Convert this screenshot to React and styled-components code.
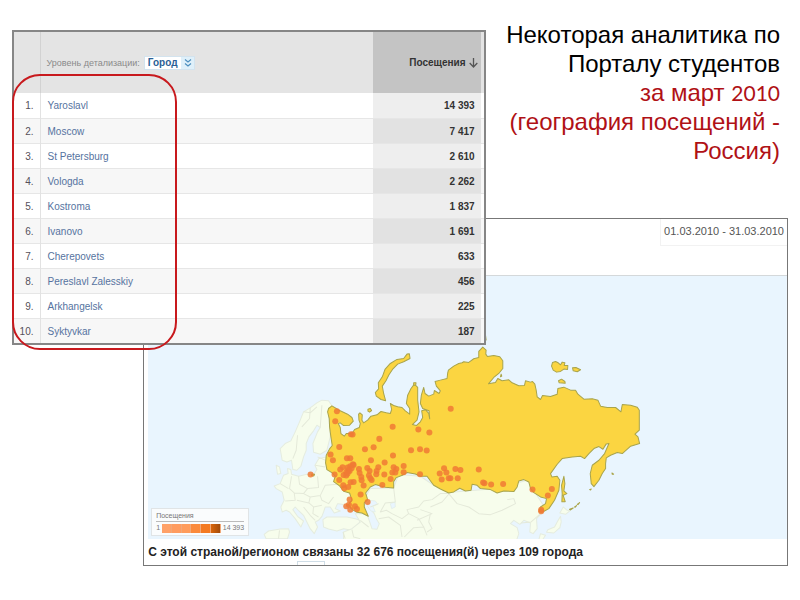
import React from 'react';
import styled, { createGlobalStyle } from 'styled-components';

const GlobalStyle = createGlobalStyle`
  *, *::before, *::after { box-sizing: border-box; }
  body {
    margin: 0;
    background: #fff;
    font-family: "Liberation Sans", Arial, sans-serif;
  }
`;

const Slide = styled.main`
  display: grid;
  grid-template-columns: 131fr 342fr 302fr;
  grid-template-rows: 198px auto;
  padding: 20px 12px 32px 12px;
`;

const Title = styled.h1`
  grid-column: 3;
  grid-row: 1;
  margin: 0 8px 0 0;
  font-size: 24px;
  line-height: 29px;
  font-weight: 400;
  text-align: right;
  white-space: nowrap;
  color: #000;
  justify-self: end;
`;

const Accent = styled.span`
  color: #b01116;
`;

const Year = styled.span`
  font-family: Lato, sans-serif;
  font-size: 21px;
  line-height: 24px;
`;

const TablePanel = styled.section`
  grid-column: 1 / 3;
  grid-row: 1 / 3;
  align-self: start;
  position: relative;
  z-index: 1;
  margin-top: 10px;
  border: 2px solid #868686;
  background: #fff;
`;

const CityTable = styled.table`
  width: 100%;
  border-collapse: collapse;
  table-layout: fixed;
  font-size: 10px;
  line-height: 14px;
`;

const NumberCol = styled.col`
  width: 26px;
`;

const VisitsCol = styled.col`
  width: 108px;
`;

const EdgeCol = styled.col`
  width: 3px;
`;

const HeadCell = styled.th`
  height: 61px;
  padding: 0 6px;
  background: ${(p) => (p.$sorted ? '#c4c4c4' : '#e4e4e4')};
  border-right: ${(p) => (p.$ruled ? '1px solid #d2d2d2' : '0')};
  color: #333;
  font-weight: 700;
  text-align: ${(p) => (p.$sorted ? 'right' : 'left')};
  white-space: nowrap;
`;

const EdgeHead = styled.td`
  padding: 0;
  background: #e4e4e4;
`;

const SortLabel = styled.span`
  display: inline-flex;
  align-items: center;
  gap: 3px;
  margin-right: -3px;
`;

const DetailPicker = styled.div`
  display: flex;
  align-items: center;
  gap: 4px;
`;

const DetailLabel = styled.label`
  color: #8a8a8a;
  font-size: 9px;
  font-weight: 400;
`;

const SelectBox = styled.span`
  display: inline-flex;
  position: relative;
`;

const Select = styled.select`
  appearance: none;
  width: 51px;
  height: 14px;
  padding: 0 0 0 3px;
  border: 1px solid #d3e3ee;
  border-radius: 0;
  background: linear-gradient(to right, #fff 36px, #dff0fa 36px);
  color: #2a5f96;
  font-family: inherit;
  font-size: 10px;
  line-height: 12px;
  font-weight: 700;
`;

const Chevrons = styled.svg`
  position: absolute;
  right: 3px;
  top: 3px;
  pointer-events: none;
`;

const Row = styled.tr`
  height: 25px;
  background: ${(p) => (p.$even ? '#f7f7f7' : '#fff')};
  border-bottom: 1px solid #e6e6e6;

  &:last-child { border-bottom: 0; }
`;

const IndexCell = styled.td`
  padding: 2px 6px 0 0;
  border-right: 1px solid #e2e2e2;
  color: #55505a;
  text-align: right;
`;

const CityCell = styled.td`
  padding: 2px 6px 0 7px;
`;

const CityLink = styled.a`
  color: #5673a0;
  text-decoration: none;
`;

const VisitsCell = styled.td`
  padding: 2px 6px 0 0;
  background: ${(p) => (p.$even ? '#e2e2e2' : '#eee')};
  color: #333;
  font-weight: 700;
  text-align: right;
`;

const Highlight = styled.div`
  position: absolute;
  left: -2px;
  top: 42px;
  bottom: -7px;
  width: 165px;
  border: 2px solid #c8191d;
  border-radius: 28px;
  pointer-events: none;
`;

const MapPanel = styled.section`
  grid-column: 2 / 4;
  grid-row: 2;
  border: 1px solid #777;
  background: #fff;
`;

const MapHeader = styled.header`
  display: flex;
  justify-content: flex-end;
  height: 57px;
  border-bottom: 1px solid #d4d8da;
`;

const DateRange = styled.time`
  height: 27px;
  padding: 0 3px;
  border-left: 1px solid #f2f2f2;
  border-bottom: 1px solid #f2f2f2;
  color: #555;
  font-size: 11px;
  line-height: 24px;
`;

const MapArea = styled.figure`
  position: relative;
  margin: 0 0 0 4px;
`;

const MapDrawing = styled.svg`
  display: block;
  width: 100%;
  height: auto;
`;

const Legend = styled.figcaption`
  position: absolute;
  left: 3px;
  bottom: 3px;
  width: 98px;
  padding: 2px 4px;
  border: 1px solid #e0e4e6;
  background: #fafcfd;
  color: #777;
  font-size: 7px;
  line-height: 10px;
`;

const LegendTitle = styled.div`
  border-bottom: 1px solid #bbb;
`;

const LegendScale = styled.div`
  display: flex;
  align-items: center;
  gap: 2px;
  padding-top: 1px;
`;

const Swatches = styled.div`
  display: grid;
  grid-template-columns: repeat(6, 1fr);
  flex: 1;
`;

const Swatch = styled.i`
  height: 9px;
  border-right: 1px solid #f0a878;
  background: ${(p) => p.$tone};
`;

const Summary = styled.p`
  margin: 0 0 0 4px;
  padding-top: 5px;
  font-size: 12px;
  line-height: 16px;
  font-weight: 700;
  color: #222;
`;

const NextRow = styled.div`
  display: flex;
  height: 5px;
  padding: 1px 0 0 153px;
`;

const NextRowBox = styled.span`
  width: 28px;
  border: 1px solid #cfdde6;
  border-bottom: 0;
`;

const cities = [
  ['Yaroslavl', '14 393'],
  ['Moscow', '7 417'],
  ['St Petersburg', '2 610'],
  ['Vologda', '2 262'],
  ['Kostroma', '1 837'],
  ['Ivanovo', '1 691'],
  ['Cherepovets', '633'],
  ['Pereslavl Zalesskiy', '456'],
  ['Arkhangelsk', '225'],
  ['Syktyvkar', '187'],
];

const tones = ['#ffa168', '#ff9c60', '#ff9c5c', '#fb8a3c', '#f47a22', 'linear-gradient(to right, #d9660c, #a34c0c)'];

const land = [
  'M60 325 L75 310 L92 302 L105 275 L118 245 L130 215 L150 203 L170 188 L185 180 L205 182 L215 197 L205 215 L210 290 L200 330 L180 342 L160 336 L158 310 L172 275 L180 262 L170 255 L160 272 L146 290 L138 310 L138 330 L130 350 L122 378 L110 390 L98 388 L94 360 L80 365 L66 360 Z',
  'M176 355 L198 350 L200 388 L225 405 L245 445 L268 460 L275 480 L260 500 L245 492 L232 490 L225 505 L240 512 L222 518 L210 500 L195 500 L190 515 L185 528 L175 540 L165 545 L172 560 L162 580 L150 565 L140 545 L130 525 L116 512 L105 500 L98 508 L112 528 L130 542 L122 560 L105 535 L88 515 L78 510 L66 515 L62 500 L72 480 L66 455 L48 445 L42 437 L60 430 L70 405 L84 400 L82 385 L92 388 L94 402 L115 408 L140 402 L160 404 L170 388 L164 375 Z',
  'M188 538 L200 530 L235 530 L260 530 L285 535 L298 540 L300 550 L290 560 L275 570 L250 565 L230 572 L205 566 L190 560 Z',
  'M12 582 L25 572 L60 566 L85 565 L88 575 L82 595 L18 595 Z',
  'M250 575 L275 565 L300 545 L285 520 L305 520 L322 527 L330 550 L335 565 L350 567 L357 550 L348 535 L342 520 L325 500 L316 470 L330 445 L400 443 L415 403 L480 408 L520 435 L565 457 L710 445 L800 420 L855 505 L842 520 L828 535 L830 565 L818 580 L808 575 L810 548 L790 540 L778 552 L760 540 L750 550 L770 562 L775 580 L768 600 L250 600 Z',
  'M908 500 L920 510 L928 512 L915 522 L898 518 Z M900 528 L902 545 L898 562 L880 578 L858 576 L862 568 L882 560 L890 545 Z M840 580 L855 585 L845 600 L835 598 Z',
  'M48 375 L58 380 L62 400 L52 402 Z',
];

const lakes = [
  'M326 480 L345 482 L352 492 L338 498 L345 515 L332 512 L322 498 Z',
  'M390 490 L404 485 L405 500 L394 505 Z',
];

const borders =
  'M112 285 L108 330 L98 355 M150 203 L148 235 L125 260 M185 195 L180 262 M130 215 L150 218 L170 200 M172 350 L200 362 M165 375 L195 380 M115 408 L118 432 L142 445 L175 442 L172 408 M142 445 L130 460 L102 458 L88 445 L94 408 M102 458 L105 480 L75 482 M130 460 L150 470 L180 466 L195 435 L232 432 M180 466 L185 480 L205 490 L220 470 M150 470 L146 488 L110 480 M146 488 L160 500 L185 495 M160 500 L158 520 L175 530 M130 500 L150 525 L165 540 M60 430 L85 445 M400 443 L405 485 L375 488 L360 515 L378 510 L395 520 M330 500 L355 490 M395 520 L425 535 L445 520 L440 508 L475 500 L490 482 L515 478 L540 460 L568 460 M355 535 L385 530 L420 555 L425 590 M445 520 L475 535 L490 560 L460 562 L432 590 M490 560 L500 585 M480 508 L515 520 L470 540 M300 540 L325 560 M248 575 L255 595 M275 568 L280 590 L300 595 M58 570 L55 595 M565 460 L590 490 L625 500 L655 520 L690 523 L725 510 L765 490 L760 475 L740 478 M565 462 L545 485 L510 500 M500 575 L515 565 L505 545 L510 520 M782 548 L812 545 L840 520';

const mainWest = 'M205 205 L215 197 L228 205 L232 208 L262 222 L275 232 L279 243 L268 255 L250 256 L240 248 L234 250 L240 262 L242 280 L252 288 L258 280 L275 280 L283 268 L297 262 L300 250 L296 240 L295 222 L299 218 L306 224 L305 240 L310 248 L322 240 L332 228 L350 224 L362 214 L378 218 L390 220 L394 208 L390 190 L400 196 L412 200 L425 202 L435 212 L448 222 L448 205 L438 190 L442 165 L452 145 L462 132 L472 142 L472 180 L476 215 L470 240 L456 253 L468 256 L480 245 L487 232 L484 212 L496 209 L505 220 L508 236 L506 212 L487 205 L480 190 L483 165 L490 142 L494 160 L505 168 L520 162 L522 151 L536 160 L540 152 L528 138 L524 124 L540 120 L560 115 ';

const east = [
  [22, 128], [24, 120], [40, 108], [55, 100], [65, 98], [70, 95], [85, 97], [100, 86], [115, 82], [115, 64], [127, 51], [137, 60], [136, 72], [141, 79],
  [160, 76], [178, 80], [187, 92], [187, 115], [175, 130], [160, 142], [144, 161], [165, 157], [172, 145], [185, 152], [205, 149], [215, 158],
  [235, 167], [252, 166], [255, 152], [270, 156], [276, 154], [283, 162], [287, 180], [290, 200], [300, 208], [306, 196], [330, 199], [350, 192], [352, 175],
  [370, 171], [390, 180], [405, 180], [412, 192], [430, 207], [455, 206], [472, 210], [480, 228], [500, 232], [525, 232], [541, 245], [545, 223],
  [570, 225], [590, 231], [596, 240], [596, 300], [583, 312], [592, 320], [597, 340], [570, 348], [545, 370], [530, 367], [510, 375], [497, 383],
  [495, 400], [495, 415], [485, 430], [475, 450], [460, 469], [452, 460], [449, 430], [455, 405], [475, 390], [492, 370], [505, 340], [497, 341],
  [487, 357], [475, 349], [460, 355], [445, 370], [432, 385], [420, 378], [395, 380], [365, 385], [350, 402], [330, 430], [334, 440],
  [350, 438], [358, 450], [355, 480], [342, 510], [325, 535], [305, 546], [296, 545], [300, 530], [315, 520], [318, 505], [300, 500],
  [280, 487], [270, 475], [265, 455], [250, 448], [235, 452], [230, 470], [220, 484], [190, 482], [170, 488], [150, 478], [120, 475], [110, 465],
  [95, 462], [92, 480], [75, 482], [58, 474], [40, 485], [25, 488], [0, 476],
];

const mainEast = east.map(([x, y]) => `L${x + 540} ${y - 30}`).join(' ');

const mainSouth = ' L520 435 L500 408 L480 408 L465 401 L440 397 L428 404 L408 412 L400 424 L400 443 L375 441 L345 433 L330 440 L316 458 L322 478 L312 488 L312 500 L324 528 L305 518 L290 516 L272 505 L265 492 L275 480 L268 458 L250 453 L238 437 L220 424 L225 408 L215 397 L200 388 L196 368 L198 345 L208 326 L216 316 L212 290 L208 260 L207 235 L202 215 Z';

const islands = [
  'M447 41 L449 55 L430 65 L412 72 L398 86 L386 104 L377 122 L366 138 L370 160 L376 182 L362 178 L348 168 L345 157 L355 146 L354 128 L366 110 L374 88 L390 70 L410 58 L430 55 L440 42 Z',
  'M323 207 L330 205 L334 211 L328 216 L323 213 Z',
  'M460 128 L467 128 L466 135 L460 135 Z',
  'M876 67 L885 64 L893 68 L900 74 L905 66 L913 68 L911 76 L922 76 L921 88 L910 87 L900 94 L888 96 L878 90 L873 78 Z',
  'M936 83 L946 82 L960 89 L950 95 L938 92 Z',
  'M894 122 L903 117 L913 124 L914 129 L896 128 Z',
  'M903 435 L910 408 L913 430 L910 452 L919 460 L908 465 L914 484 L904 484 L905 460 Z',
  'M671 -25 L674 -25 L677 0 L671 -3 Z',
  'M722 102 L724 108 L720 110 Z',
  'M927 507 L938 503 L929 509 Z M942 500 L948 496 L944 501 Z M950 492 L957 487 L952 493 Z',
  'M1054 398 L1059 402 L1055 402 Z M987 448 L992 446 L990 449 Z',
  'M155 401 L163 402 L161 407 L154 406 Z',
];

const dots = [
  [230, 213], [225, 243], [272, 282], [277, 283], [237, 320], [211, 343], [218, 360], [314, 327], [340, 321], [357, 296], [397, 260],
  [474, 268], [507, 277], [571, 206], [452, 330], [479, 327], [499, 331], [398, 346], [332, 360], [373, 367], [260, 354], [270, 354],
  [278, 372], [270, 378], [274, 384], [262, 382], [247, 381], [264, 390], [258, 396], [268, 392], [250, 404], [258, 406], [262, 400], [280, 374],
  [296, 386], [298, 398], [303, 410], [304, 420], [310, 436], [321, 383], [328, 392], [326, 406], [334, 419], [354, 381], [349, 392],
  [348, 402], [372, 403], [400, 381], [408, 386], [396, 397], [405, 397], [391, 416], [430, 377], [430, 396], [479, 402], [366, 434],
  [223, 403], [237, 419], [249, 435], [252, 444], [264, 440], [271, 426], [280, 425], [301, 463], [322, 485], [268, 478], [258, 498],
  [266, 493], [270, 508], [284, 498], [290, 506], [151, 403], [538, 400], [551, 384], [558, 397], [544, 418], [565, 414], [570, 414],
  [592, 414], [585, 386], [600, 389], [655, 388], [668, 427], [672, 429], [692, 433], [728, 431], [816, 448], [874, 446], [862, 466], [842, 508],
  [842, 513], [330, 414], [240, 388],
];

function RussiaMap() {
  return (
    <MapDrawing viewBox="148 276 638 263" role="img" aria-label="Карта посещений по городам России">
      <rect x="148" y="276" width="638" height="263" fill="#e9f5fe" />
      <g transform="translate(260 340) scale(0.33333)" strokeLinejoin="round">
        <g fill="#f7fdec" stroke="#e5ecdf" strokeWidth="3">
          {land.map((d) => <path key={d} d={d} />)}
        </g>
        <g fill="#e9f5fe" stroke="#e0ebe6" strokeWidth="2">
          {lakes.map((d) => <path key={d} d={d} />)}
        </g>
        <path d={borders} fill="none" stroke="#e4e9d9" strokeWidth="3" />
        <g fill="#fbd541" stroke="#a8a44c" strokeWidth="3">
          <path d={mainWest + mainEast + mainSouth} />
          {islands.map((d) => <path key={d} d={d} />)}
        </g>
        <g fill="#f07a35" fillOpacity="0.85">
          {dots.map(([x, y]) => <circle key={`${x}-${y}`} cx={x} cy={y} r="9" />)}
        </g>
      </g>
    </MapDrawing>
  );
}

export default function App() {
  return (
    <>
      <GlobalStyle />
      <Slide>
        <Title>
          Некоторая аналитика по
          <br />
          Порталу студентов
          <br />
          <Accent>
            за март <Year>2010</Year>
            <br />
            (география посещений -
            <br />
            Россия)
          </Accent>
        </Title>

        <TablePanel>
          <CityTable>
            <colgroup>
              <NumberCol />
              <col />
              <VisitsCol />
              <EdgeCol />
            </colgroup>
            <thead>
              <tr>
                <HeadCell $ruled aria-label="№" />
                <HeadCell>
                  <DetailPicker>
                    <DetailLabel htmlFor="detail">Уровень детализации:</DetailLabel>
                    <SelectBox>
                      <Select id="detail" defaultValue="city">
                        <option value="city">Город</option>
                      </Select>
                      <Chevrons width="8" height="8" viewBox="0 0 8 8" fill="none" stroke="#4d8fbf" strokeWidth="1.2">
                        <path d="M1 .5 L4 3 L7 .5 M1 4.5 L4 7 L7 4.5" />
                      </Chevrons>
                    </SelectBox>
                  </DetailPicker>
                </HeadCell>
                <HeadCell $sorted aria-sort="descending">
                  <SortLabel>
                    Посещения
                    <svg width="9" height="10" viewBox="0 0 9 10" fill="none" stroke="#555" strokeWidth="1.3">
                      <path d="M4.5 0 V9 M.7 5 L4.5 9 L8.3 5" />
                    </svg>
                  </SortLabel>
                </HeadCell>
                <EdgeHead />
              </tr>
            </thead>
            <tbody>
              {cities.map(([city, visits], i) => (
                <Row key={city} $even={i % 2 === 1}>
                  <IndexCell>{i + 1}.</IndexCell>
                  <CityCell><CityLink href="#">{city}</CityLink></CityCell>
                  <VisitsCell $even={i % 2 === 1}>{visits}</VisitsCell>
                  <td />
                </Row>
              ))}
            </tbody>
          </CityTable>
          <Highlight />
        </TablePanel>

        <MapPanel>
          <MapHeader>
            <DateRange>01.03.2010 - 31.03.2010</DateRange>
          </MapHeader>
          <MapArea>
            <RussiaMap />
            <Legend>
              <LegendTitle>Посещения</LegendTitle>
              <LegendScale>
                1
                <Swatches>
                  {tones.map((tone, i) => <Swatch key={i} $tone={tone} />)}
                </Swatches>
                14 393
              </LegendScale>
            </Legend>
          </MapArea>
          <Summary>С этой страной/регионом связаны 32 676 посещения(й) через 109 города</Summary>
          <NextRow><NextRowBox /></NextRow>
        </MapPanel>
      </Slide>
    </>
  );
}
